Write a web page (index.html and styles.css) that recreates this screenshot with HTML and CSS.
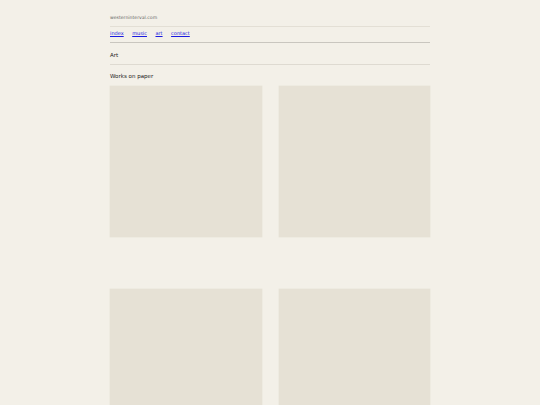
FILE: index.html
```html
<!DOCTYPE html>
<html>
<head>
<meta charset="utf-8">
<link rel="stylesheet" href="styles.css">
</head>
<body>
<div class="page">
  <header class="site">
    <div class="site-name">westerninterval.com</div>
    <nav class="nav">
      <a href="#">index</a>
      <a href="#">music</a>
      <a href="#">art</a>
      <a href="#">contact</a>
    </nav>
  </header>
  <h1 class="title">Art</h1>
  <h2 class="subtitle">Works on paper</h2>
  <div class="grid">
    <div class="tile"></div>
    <div class="tile"></div>
    <div class="tile"></div>
    <div class="tile"></div>
  </div>
</div>
</body>
</html>
```
FILE: styles.css
```css
html, body {
  margin: 0;
  padding: 0;
  background: #f3f0e8;
}
body {
  font-family: "DejaVu Sans", sans-serif;
  color: #222;
}
.page {
  width: 320px;
  margin: 0 auto;
  padding-top: 14px;
}
.site-name {
  font-size: 4.6px;
  line-height: 8px;
  color: #666;
  padding-bottom: 4px;
  border-bottom: 1px solid #e3dfd5;
}
.nav {
  display: flex;
  gap: 8.5px;
  font-size: 5px;
  line-height: 8px;
  padding: 2px 0 5px;
  border-bottom: 1px solid #c9c6bf;
}
.nav a {
  color: #1a1ae0;
  text-decoration: underline;
}
.title {
  margin: 0;
  font-weight: normal;
  font-size: 5.5px;
  line-height: 8px;
  padding: 8px 0 5px;
  border-bottom: 1px solid #dedad1;
}
.subtitle {
  margin: 0;
  font-weight: normal;
  font-size: 5.5px;
  line-height: 8px;
  padding: 7px 0 6px;
}
.grid {
  display: grid;
  grid-template-columns: 1fr 1fr;
  column-gap: 17px;
  row-gap: 52px;
}
.tile {
  height: 151px;
  background: #e6e1d5;
  box-shadow: 0 0 0 0.5px #e9e5da;
}
```
